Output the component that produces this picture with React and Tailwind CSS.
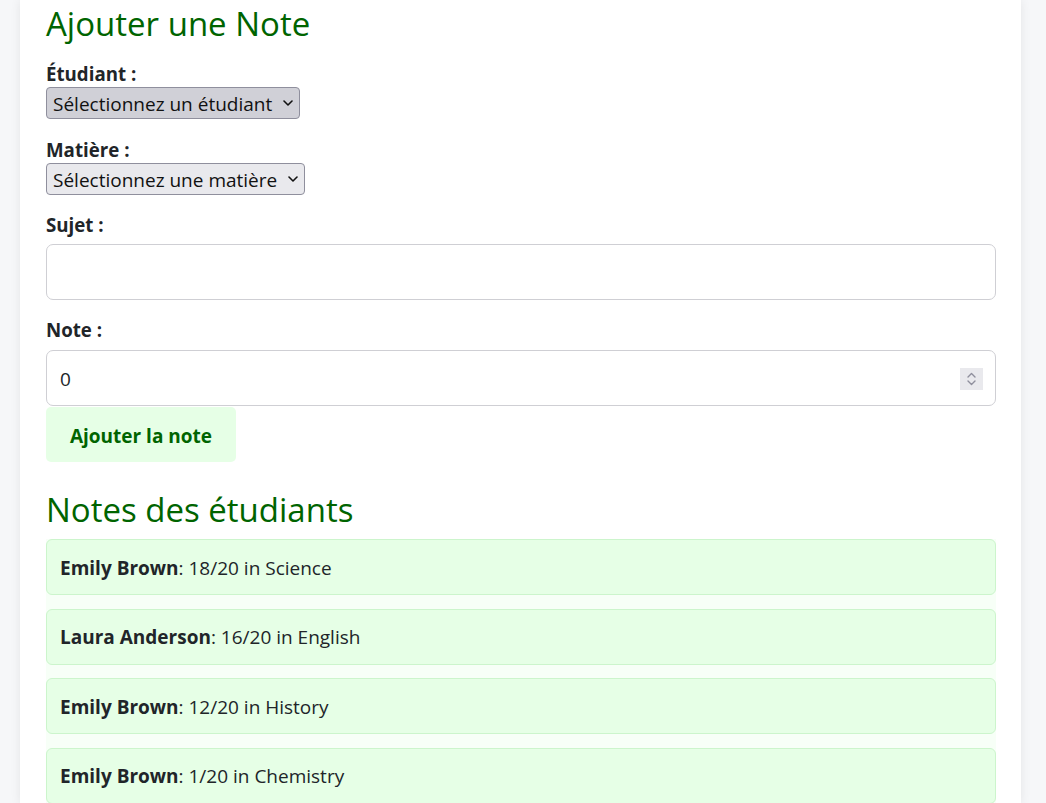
import React from 'react';

const students = ['Emily Brown', 'Laura Anderson', 'John Smith'];
const subjects = ['Science', 'English', 'History', 'Chemistry'];

const notes = [
  { name: 'Emily Brown', note: 18, subject: 'Science' },
  { name: 'Laura Anderson', note: 16, subject: 'English' },
  { name: 'Emily Brown', note: 12, subject: 'History' },
  { name: 'Emily Brown', note: 1, subject: 'Chemistry' },
];

function Chevron() {
  return (
    <svg className="pointer-events-none absolute right-[7px] top-[13px]" width="10" height="6" viewBox="0 0 10 6" fill="none">
      <path d="M1 1l4 4 4-4" stroke="#111" strokeWidth="1.6" strokeLinecap="round" strokeLinejoin="round" />
    </svg>
  );
}

function Select({ placeholder, options, hovered }) {
  return (
    <div className="relative inline-block">
      <select
        defaultValue=""
        className={`appearance-none h-[32px] pl-[6px] pr-[26px] pt-[2px] text-[19px] leading-[22px] text-[#111] border border-[#8f8f9d] rounded-[4px] ${hovered ? 'bg-[#d0d0d7]' : 'bg-[#e9e9ed]'}`}
      >
        <option value="">{placeholder}</option>
        {options.map((o) => (
          <option key={o} value={o}>{o}</option>
        ))}
      </select>
      <Chevron />
    </div>
  );
}

export default function App() {
  return (
    <div className="min-h-screen bg-[#f6f7f9] font-['Open_Sans',sans-serif] text-[#212529]">
      <div className="ml-[20px] w-[1001px] min-h-screen bg-white pt-[4px] pl-[26px] pr-[25px] shadow-[0_0_10px_rgba(0,0,0,0.08)]">
        <h2 className="text-[33px] leading-[40px] text-[#006400] mb-[17px]">Ajouter une Note</h2>

        <form onSubmit={(e) => e.preventDefault()}>
          <div className="mb-[18px]">
            <label className="block text-[18.7px] leading-[26px] font-bold">Étudiant :</label>
            <Select placeholder="Sélectionnez un étudiant" options={students} hovered />
          </div>

          <div className="mb-[17px]">
            <label className="block text-[18.7px] leading-[26px] font-bold">Matière :</label>
            <Select placeholder="Sélectionnez une matière" options={subjects} />
          </div>

          <div className="mb-[17px]">
            <label className="block text-[18.7px] leading-[26px] font-bold">Sujet :</label>
            <input
              type="text"
              className="mt-[6px] block w-full h-[56px] px-[13px] text-[19px] border border-[#cfcfd4] rounded-[7px] bg-white"
            />
          </div>

          <div>
            <label className="block text-[18.7px] leading-[26px] font-bold">Note :</label>
            <div className="relative mt-[7px]">
              <input
                type="number"
                defaultValue={0}
                className="block w-full h-[56px] px-[13px] pt-[2px] text-[19px] border border-[#cfcfd4] rounded-[7px] bg-white [appearance:textfield] [&::-webkit-inner-spin-button]:appearance-none [&::-webkit-outer-spin-button]:appearance-none"
              />
              <div className="pointer-events-none absolute right-[13px] top-[18px] w-[23px] h-[22px] bg-[#e9e9ed] flex items-center justify-center">
                <svg width="11" height="16" viewBox="0 0 11 16" fill="none">
                  <path d="M2 6l3.5-3.5L9 6" stroke="#8f8f9d" strokeWidth="1.4" strokeLinecap="round" strokeLinejoin="round" />
                  <path d="M2 10l3.5 3.5L9 10" stroke="#8f8f9d" strokeWidth="1.4" strokeLinecap="round" strokeLinejoin="round" />
                </svg>
              </div>
            </div>
          </div>

          <button
            type="submit"
            className="mt-px h-[55px] w-[190px] pt-[3px] rounded-[5px] bg-[#e6ffe6] text-[19px] font-bold text-[#006400]"
          >
            Ajouter la note
          </button>
        </form>

        <h2 className="mt-[28px] mb-[9px] text-[33px] leading-[40px] text-[#006400]">Notes des étudiants</h2>

        <ul className="bg-[#f7fff7]">
          {notes.map((n, i) => (
            <li
              key={i}
              className="mb-[13.5px] h-[56px] flex items-center px-[13px] pt-[2px] bg-[#e6ffe6] border border-[#ccf5cc] rounded-[6px] text-[19px]"
            >
              <strong>{n.name}</strong>: {n.note}/20 in {n.subject}
            </li>
          ))}
        </ul>
      </div>
    </div>
  );
}
